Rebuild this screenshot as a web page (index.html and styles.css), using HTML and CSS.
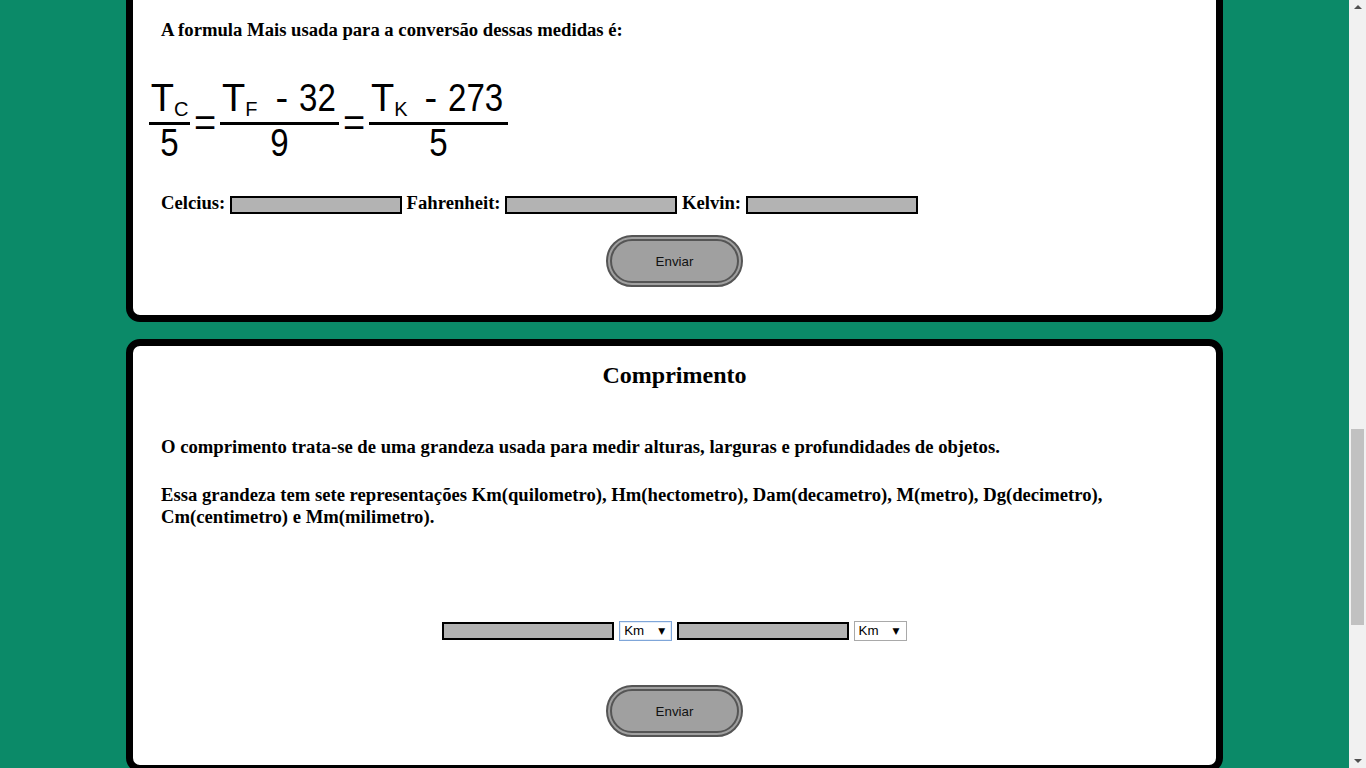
FILE: index.html
```html
<!DOCTYPE html>
<html lang="pt">
<head>
<meta charset="utf-8">
<title>Conversor de medidas</title>
<link rel="stylesheet" href="styles.css">
</head>
<body>
<div class="screen">
  <main class="page">
    <section class="card card-temp">
      <p class="text">A formula Mais usada para a conversão dessas medidas é:</p>
      <div class="formula">
        <div class="frac f1">
          <div class="num">T<sub>C</sub></div>
          <div class="den"><span class="digit">5</span></div>
        </div>
        <div class="eq">=</div>
        <div class="frac f2">
          <div class="num">T<sub>F</sub><span class="minus">-</span><span class="val">32</span></div>
          <div class="den"><span class="digit">9</span></div>
        </div>
        <div class="eq">=</div>
        <div class="frac f3">
          <div class="num">T<sub>K</sub><span class="minus">-</span><span class="val">273</span></div>
          <div class="den"><span class="digit">5</span></div>
        </div>
      </div>
      <div class="fields">
        <label for="c">Celcius:</label> <input id="c" class="field" type="text"> <label for="f">Fahrenheit:</label> <input id="f" class="field" type="text"> <label for="k">Kelvin:</label> <input id="k" class="field" type="text">
      </div>
      <button class="btn btn-temp" type="button">Enviar</button>
    </section>

    <section class="card card-length">
      <h2 class="title">Comprimento</h2>
      <p class="text p-first">O comprimento trata-se de uma grandeza usada para medir alturas, larguras e profundidades de objetos.</p>
      <p class="text p-second">Essa grandeza tem sete representações Km(quilometro), Hm(hectometro), Dam(decametro), M(metro), Dg(decimetro), Cm(centimetro) e Mm(milimetro).</p>
      <div class="converter">
        <input class="field" type="text"> <span class="select-wrap focused"><select><option>Km</option><option>Hm</option><option>Dam</option><option>M</option><option>Dg</option><option>Cm</option><option>Mm</option></select></span> <input class="field" type="text"> <span class="select-wrap"><select><option>Km</option><option>Hm</option><option>Dam</option><option>M</option><option>Dg</option><option>Cm</option><option>Mm</option></select></span>
      </div>
      <button class="btn btn-length" type="button">Enviar</button>
    </section>
  </main>
  <div class="scrollbar" aria-hidden="true">
    <span class="arrow-up"></span>
    <div class="track"><div class="thumb"></div></div>
    <span class="arrow-down"></span>
  </div>
</div>
</body>
</html>
```
FILE: styles.css
```css
html, body {
  margin: 0;
  height: 100%;
  overflow: hidden;
}

body {
  background: #0b8a68;
  font-family: "Liberation Serif", "Times New Roman", serif;
  font-size: 14pt;
  font-weight: bold;
  color: #000;
}

.screen {
  display: flex;
  height: 100vh;
}

.page {
  flex: 1;
  display: flex;
  flex-direction: column;
  align-items: center;
  gap: 17px;
  margin-top: -30px;
}

.card {
  flex-shrink: 0;
  width: 1097px;
  box-sizing: border-box;
  background: #fff;
  border: 7px solid #000;
  border-radius: 14px;
  padding: 0 28px;
}

.card-temp {
  padding-top: 42px;
  padding-bottom: 28px;
}

.card-length {
  padding-top: 16px;
  padding-bottom: 28px;
}

.text {
  margin: 0;
}

/* formula */
.formula {
  display: flex;
  align-items: flex-start;
  gap: 5px;
  margin: 38px 0 0 -12px;
  font-family: "Liberation Sans", Arial, sans-serif;
  font-weight: normal;
}

.frac {
  display: flex;
  flex-direction: column;
}

.f1 { width: 41px; }
.f2 { width: 119px; }
.f3 { width: 139px; }

.num {
  height: 38px;
  padding-bottom: 5px;
  border-bottom: 3px solid #000;
  font-size: 38px;
  line-height: 38px;
  text-align: center;
  white-space: nowrap;
}

.f2 .num, .f3 .num {
  text-align: left;
  padding-left: 2px;
}

.num sub {
  font-size: 20px;
  line-height: 0;
  vertical-align: -5px;
}

.minus {
  margin-left: 18px;
}

.f3 .minus {
  margin-left: 17px;
}

.val {
  display: inline-block;
  margin-left: 11px;
  transform: scaleX(0.87);
  transform-origin: left center;
}

.den {
  font-size: 38px;
  line-height: 38px;
  text-align: center;
  margin-top: -1px;
}

.digit {
  display: inline-block;
  transform: scaleX(0.87);
}

.eq {
  width: 20px;
  display: flex;
  justify-content: center;
  margin-top: 25px;
  font-size: 38px;
  line-height: 38px;
}

/* inputs */
.fields {
  margin-top: 30px;
}

.field {
  display: inline-block;
  vertical-align: middle;
  width: 172px;
  height: 18px;
  box-sizing: border-box;
  margin: 0;
  padding: 0 2px;
  border: 2px solid #000;
  background: #b3b3b3;
  font-family: "Liberation Sans", Arial, sans-serif;
  font-size: 13px;
}

.btn {
  display: block;
  margin: 21px auto 0;
  width: 137px;
  height: 52px;
  box-sizing: border-box;
  border: 6px double #555;
  border-radius: 26px;
  background: #a0a0a0;
  color: #111;
  font-family: "Liberation Sans", Arial, sans-serif;
  font-size: 13.33px;
  font-weight: normal;
  padding: 1px 0 0;
}

.btn-length {
  margin-top: 44px;
}

/* second card */
.title {
  margin: 0;
  text-align: center;
  font-size: 24px;
}

.p-first {
  margin-top: 47px;
}

.p-second {
  margin-top: 26px;
}

.converter {
  margin-top: 90px;
  text-align: center;
}

.select-wrap {
  position: relative;
  display: inline-block;
  vertical-align: middle;
}

.select-wrap select {
  -webkit-appearance: none;
  appearance: none;
  display: block;
  width: 53px;
  height: 20px;
  box-sizing: border-box;
  margin: 0;
  padding: 0 0 0 4px;
  border: 1px solid #a9a9a9;
  border-radius: 0;
  background: #fff;
  color: #000;
  font-family: "Liberation Sans", Arial, sans-serif;
  font-size: 13.33px;
}

.select-wrap.focused select {
  border-color: #7fa6d9;
  box-shadow: inset 0 0 0 1px #e3ecf8;
}

.select-wrap::after {
  content: "\25BC";
  position: absolute;
  right: 7px;
  top: 4px;
  font-family: "DejaVu Sans", sans-serif;
  font-size: 9px;
  line-height: 12px;
  color: #000;
  pointer-events: none;
}

/* scrollbar */
.scrollbar {
  flex: 0 0 17px;
  height: 100vh;
  background: #f1f1f1;
  display: flex;
  flex-direction: column;
  align-items: center;
}

.arrow-up, .arrow-down {
  width: 0;
  height: 0;
  border-left: 4px solid transparent;
  border-right: 4px solid transparent;
}

.arrow-up {
  margin-top: 5px;
  border-bottom: 4px solid #505050;
}

.arrow-down {
  margin-bottom: 5px;
  border-top: 4px solid #505050;
}

.track {
  flex: 1;
  width: 100%;
  display: flex;
  justify-content: center;
}

.thumb {
  width: 13px;
  height: 196px;
  margin-top: 420px;
  background: #c1c1c1;
}
```
